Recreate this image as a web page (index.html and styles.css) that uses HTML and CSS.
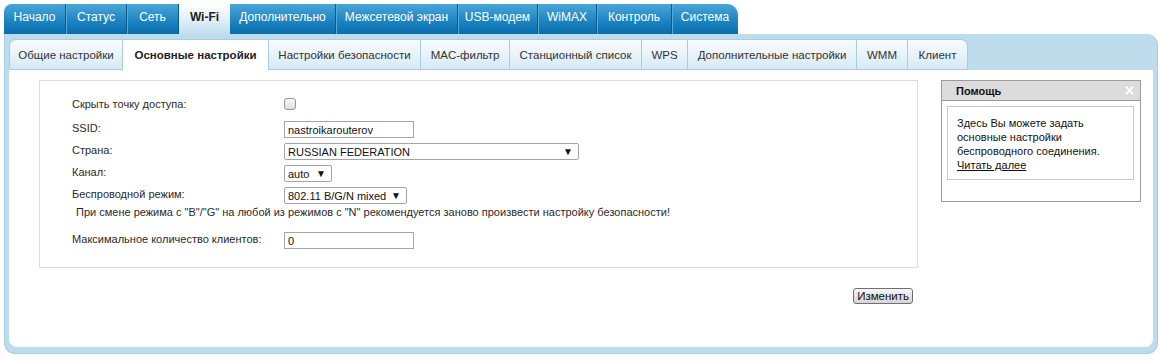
FILE: index.html
```html
<!DOCTYPE html>
<html lang="ru">
<head>
<meta charset="utf-8">
<title>Wi-Fi — Основные настройки</title>
<link rel="stylesheet" href="styles.css">
</head>
<body>
<div class="page">
  <nav class="topnav">
    <a class="ttab t-home">Начало</a>
    <a class="ttab t-status">Статус</a>
    <a class="ttab t-net">Сеть</a>
    <a class="ttab t-wifi active">Wi-Fi</a>
    <a class="ttab t-adv">Дополнительно</a>
    <a class="ttab t-fw">Межсетевой экран</a>
    <a class="ttab t-usb">USB-модем</a>
    <a class="ttab t-wimax">WiMAX</a>
    <a class="ttab t-ctl">Контроль</a>
    <a class="ttab t-sys">Система</a>
  </nav>
  <div class="panel">
    <nav class="subnav">
      <a class="stab s-common">Общие настройки</a>
      <a class="stab s-basic active">Основные настройки</a>
      <a class="stab s-sec">Настройки безопасности</a>
      <a class="stab s-mac">MAC-фильтр</a>
      <a class="stab s-sta">Станционный список</a>
      <a class="stab s-wps">WPS</a>
      <a class="stab s-adv">Дополнительные настройки</a>
      <a class="stab s-wmm">WMM</a>
      <a class="stab s-client">Клиент</a>
    </nav>
    <div class="content">
      <div class="main">
        <div class="formbox">
          <div class="row r-first">
            <span class="label">Скрыть точку доступа:</span>
            <span class="checkbox"></span>
          </div>
          <div class="row">
            <span class="label">SSID:</span>
            <input class="text" type="text" value="nastroikarouterov">
          </div>
          <div class="row">
            <span class="label">Страна:</span>
            <span class="select sel-country">RUSSIAN FEDERATION</span>
          </div>
          <div class="row">
            <span class="label">Канал:</span>
            <span class="select sel-channel">auto</span>
          </div>
          <div class="row r-mode">
            <span class="label">Беспроводной режим:</span>
            <span class="select sel-mode">802.11 B/G/N mixed</span>
          </div>
          <div class="note">При смене режима с "B"/"G" на любой из режимов с "N" рекомендуется заново произвести настройку безопасности!</div>
          <div class="row r-last">
            <span class="label">Максимальное количество клиентов:</span>
            <input class="text" type="text" value="0">
          </div>
        </div>
        <div class="actions">
          <button class="btn" type="button">Изменить</button>
        </div>
      </div>
      <aside class="help">
        <div class="help-head">
          <span class="help-title">Помощь</span>
          <span class="help-close">×</span>
        </div>
        <div class="help-body">
          Здесь Вы можете задать основные настройки беспроводного соединения.<br>
          <a class="help-link">Читать далее</a>
        </div>
      </aside>
    </div>
  </div>
</div>
</body>
</html>
```
FILE: styles.css
```css
* { box-sizing: border-box; }

body {
  margin: 0;
  background: #fff;
  color: #2a2a2a;
  font-family: "Liberation Sans", Arial, sans-serif;
  font-size: 11px;
}

.page {
  padding: 4px 3px 6px 4px;
}

/* ---------- top navigation ---------- */
.topnav {
  display: flex;
  height: 30px;
}

.ttab {
  display: flex;
  align-items: center;
  justify-content: center;
  padding-bottom: 4px;
  color: #fff;
  font-size: 12px;
  background: linear-gradient(#4aa6d8, #1b82c0 60%, #0a6cab);
  border-left: 1px solid #0b5a8e;
  box-shadow: inset 1px 0 0 #56acd9;
  cursor: pointer;
}

.ttab.t-home { border-left: none; border-top-left-radius: 8px; box-shadow: none; }
.ttab.t-sys { border-top-right-radius: 11px; }

.ttab.active {
  background: linear-gradient(#ffffff, #e6f2f9 45%, #c0dfef);
  color: #222;
  font-weight: bold;
  box-shadow: none;
}
.ttab.active + .ttab { border-left: none; box-shadow: none; }

.t-home { width: 61px; }
.t-status { width: 61px; }
.t-net { width: 52px; }
.t-wifi { width: 52px; }
.t-adv { width: 105px; }
.t-fw { width: 122px; }
.t-usb { width: 80px; }
.t-wimax { width: 59px; }
.t-ctl { width: 75px; }
.t-sys { width: 67px; }

/* ---------- main panel ---------- */
.panel {
  height: 320px;
  background: #bddcec;
  border: 1px solid #a6cde2;
  border-top: none;
  border-radius: 0 11px 11px 11px;
  padding: 5px 4px 6px 4px;
  display: flex;
  flex-direction: column;
}

.subnav {
  display: flex;
  height: 31px;
}

.stab {
  display: flex;
  align-items: center;
  justify-content: center;
  font-size: 11.5px;
  color: #333;
  background: linear-gradient(#f7fbfd, #e8f3f9 50%, #d6e9f4);
  border: 1px solid #a8cde2;
  border-left: none;
  cursor: pointer;
}
.stab.s-common { border-left: 1px solid #a8cde2; border-top-left-radius: 7px; }
.stab.s-client { border-top-right-radius: 7px; }

.stab.active {
  background: #fff;
  font-weight: bold;
  color: #222;
  border-bottom: none;
}

.s-common { width: 114px; }
.s-basic { width: 146px; }
.s-sec { width: 152px; }
.s-mac { width: 89px; }
.s-sta { width: 132px; }
.s-wps { width: 46px; }
.s-adv { width: 169px; }
.s-wmm { width: 51px; }
.s-client { width: 60px; }

.content {
  flex: 1;
  background: #fff;
  border-radius: 0 0 8px 8px;
  display: flex;
  gap: 23px;
  padding: 10px 12px 0 30px;
}

.main {
  width: 879px;
}

.formbox {
  height: 188px;
  border: 1px solid #dcdcdc;
  padding: 16px 0 0 32px;
}

.row {
  display: flex;
  align-items: flex-start;
  height: 22px;
}
.row.r-first { height: 24px; }
.row.r-mode { height: 17px; }
.row.r-last { margin-top: 12px; height: 17px; }

.label {
  width: 212px;
  line-height: 14px;
}

.checkbox {
  display: block;
  width: 12px;
  height: 12px;
  margin-top: 1px;
  border: 1px solid #999;
  border-radius: 3px;
  background: linear-gradient(#f8f8f8, #dedede);
}

.text {
  width: 130px;
  height: 17px;
  margin: 0;
  padding: 0 3px;
  border: 1px solid #a5a5a5;
  font-family: "Liberation Sans", Arial, sans-serif;
  font-size: 11px;
  color: #111;
  background: #fff;
}

.select {
  display: flex;
  align-items: center;
  justify-content: space-between;
  height: 17px;
  padding: 0 5px 0 3px;
  border: 1px solid #a5a5a5;
  border-radius: 2px;
  color: #111;
  background: #fff;
}
.select::after {
  content: "▼";
  font-size: 10px;
  line-height: 10px;
  color: #111;
}
.sel-country { width: 295px; }
.sel-channel { width: 48px; }
.sel-mode { width: 123px; }

.note {
  margin-left: 4px;
  line-height: 16px;
}

.actions {
  display: flex;
  justify-content: flex-end;
  padding: 20px 5px 0 0;
}

.btn {
  height: 16px;
  padding: 0 3px;
  font-family: "Liberation Sans", Arial, sans-serif;
  font-size: 11.5px;
  line-height: 14px;
  color: #111;
  border: 1px solid #707070;
  border-radius: 3px;
  background: linear-gradient(#f6f6f6, #e4e4e4 50%, #d6d6d6);
}

/* ---------- help ---------- */
.help {
  width: 200px;
  height: 122px;
  border: 1px solid #9c9c9c;
  display: flex;
  flex-direction: column;
}

.help-head {
  height: 20px;
  display: flex;
  align-items: center;
  justify-content: space-between;
  padding: 0 6px 0 14px;
  background: #dcdcdc;
  border-bottom: 1px solid #9c9c9c;
}

.help-title {
  font-weight: bold;
  color: #111;
}

.help-close {
  color: #fff;
  font-size: 16px;
  font-weight: bold;
  line-height: 16px;
}

.help-body {
  margin: 5px 6px 0 5px;
  padding: 9px 10px 7px 9px;
  border: 1px solid #c8c8c8;
  line-height: 14px;
  color: #111;
}

.help-link {
  color: #111;
  text-decoration: underline;
  cursor: pointer;
}
```
